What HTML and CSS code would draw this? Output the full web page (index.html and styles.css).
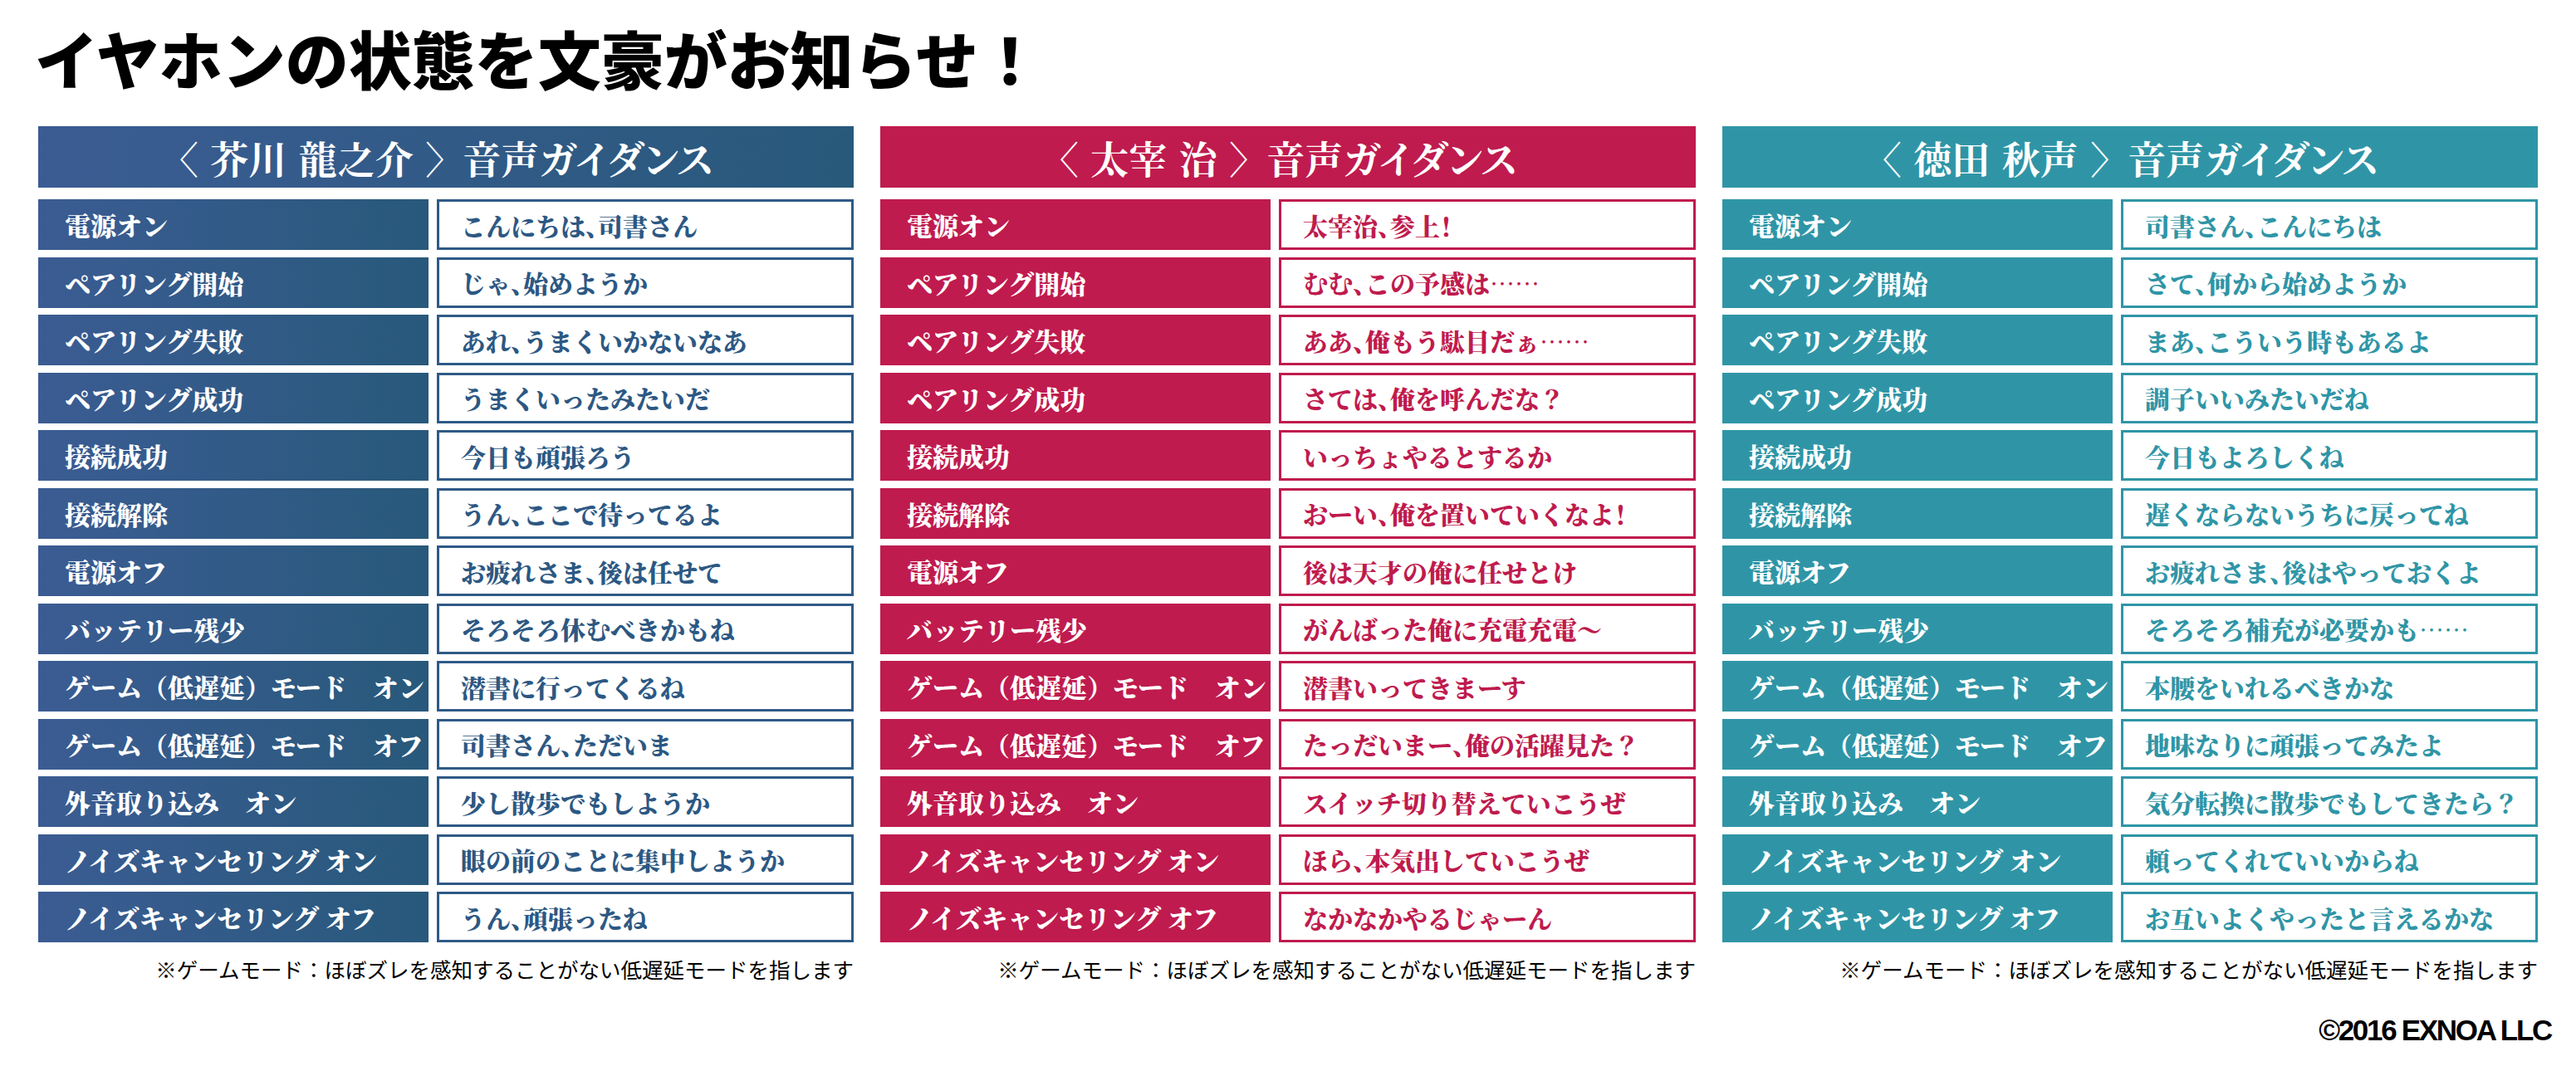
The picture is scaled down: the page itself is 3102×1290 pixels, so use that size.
FILE: index.html
```html
<!DOCTYPE html>
<html lang="ja">
<head>
<meta charset="utf-8">
<title>イヤホンの状態を文豪がお知らせ！</title>
<link rel="stylesheet" href="styles.css">
</head>
<body>
<div class="page">
  <h1 class="title">イヤホンの状態を文豪がお知らせ！</h1>
  <div class="columns">
    <section class="col col-blue">
      <div class="head">〈 芥川 龍之介 〉<span class="sub">音声ガイダンス</span></div>
      <div class="rows">
        <div class="row"><div class="key">電源オン</div><div class="val">こんにちは<span class="p">、</span>司書さん</div></div>
        <div class="row"><div class="key">ペアリング開始</div><div class="val">じゃ<span class="p">、</span>始めようか</div></div>
        <div class="row"><div class="key">ペアリング失敗</div><div class="val">あれ<span class="p">、</span>うまくいかないなあ</div></div>
        <div class="row"><div class="key">ペアリング成功</div><div class="val">うまくいったみたいだ</div></div>
        <div class="row"><div class="key">接続成功</div><div class="val">今日も頑張ろう</div></div>
        <div class="row"><div class="key">接続解除</div><div class="val">うん<span class="p">、</span>ここで待ってるよ</div></div>
        <div class="row"><div class="key">電源オフ</div><div class="val">お疲れさま<span class="p">、</span>後は任せて</div></div>
        <div class="row"><div class="key">バッテリー残少</div><div class="val">そろそろ休むべきかもね</div></div>
        <div class="row"><div class="key">ゲーム（低遅延）モード　オン</div><div class="val">潜書に行ってくるね</div></div>
        <div class="row"><div class="key">ゲーム（低遅延）モード　オフ</div><div class="val">司書さん<span class="p">、</span>ただいま</div></div>
        <div class="row"><div class="key">外音取り込み　オン</div><div class="val">少し散歩でもしようか</div></div>
        <div class="row"><div class="key">ノイズキャンセリング オン</div><div class="val">眼の前のことに集中しようか</div></div>
        <div class="row"><div class="key">ノイズキャンセリング オフ</div><div class="val">うん<span class="p">、</span>頑張ったね</div></div>
      </div>
      <p class="note">※ゲームモード：ほぼズレを感知することがない低遅延モードを指します</p>
    </section>
    <section class="col col-red">
      <div class="head">〈 太宰 治 〉<span class="sub">音声ガイダンス</span></div>
      <div class="rows">
        <div class="row"><div class="key">電源オン</div><div class="val">太宰治<span class="p">、</span>参上<span class="p">！</span></div></div>
        <div class="row"><div class="key">ペアリング開始</div><div class="val">むむ<span class="p">、</span>この予感は……</div></div>
        <div class="row"><div class="key">ペアリング失敗</div><div class="val">ああ<span class="p">、</span>俺もう駄目だぁ……</div></div>
        <div class="row"><div class="key">ペアリング成功</div><div class="val">さては<span class="p">、</span>俺を呼んだな<span class="p">？</span></div></div>
        <div class="row"><div class="key">接続成功</div><div class="val">いっちょやるとするか</div></div>
        <div class="row"><div class="key">接続解除</div><div class="val">おーい<span class="p">、</span>俺を置いていくなよ<span class="p">！</span></div></div>
        <div class="row"><div class="key">電源オフ</div><div class="val">後は天才の俺に任せとけ</div></div>
        <div class="row"><div class="key">バッテリー残少</div><div class="val">がんばった俺に充電充電～</div></div>
        <div class="row"><div class="key">ゲーム（低遅延）モード　オン</div><div class="val">潜書いってきまーす</div></div>
        <div class="row"><div class="key">ゲーム（低遅延）モード　オフ</div><div class="val">たっだいまー<span class="p">、</span>俺の活躍見た<span class="p">？</span></div></div>
        <div class="row"><div class="key">外音取り込み　オン</div><div class="val">スイッチ切り替えていこうぜ</div></div>
        <div class="row"><div class="key">ノイズキャンセリング オン</div><div class="val">ほら<span class="p">、</span>本気出していこうぜ</div></div>
        <div class="row"><div class="key">ノイズキャンセリング オフ</div><div class="val">なかなかやるじゃーん</div></div>
      </div>
      <p class="note">※ゲームモード：ほぼズレを感知することがない低遅延モードを指します</p>
    </section>
    <section class="col col-teal">
      <div class="head">〈 徳田 秋声 〉<span class="sub">音声ガイダンス</span></div>
      <div class="rows">
        <div class="row"><div class="key">電源オン</div><div class="val">司書さん<span class="p">、</span>こんにちは</div></div>
        <div class="row"><div class="key">ペアリング開始</div><div class="val">さて<span class="p">、</span>何から始めようか</div></div>
        <div class="row"><div class="key">ペアリング失敗</div><div class="val">まあ<span class="p">、</span>こういう時もあるよ</div></div>
        <div class="row"><div class="key">ペアリング成功</div><div class="val">調子いいみたいだね</div></div>
        <div class="row"><div class="key">接続成功</div><div class="val">今日もよろしくね</div></div>
        <div class="row"><div class="key">接続解除</div><div class="val">遅くならないうちに戻ってね</div></div>
        <div class="row"><div class="key">電源オフ</div><div class="val">お疲れさま<span class="p">、</span>後はやっておくよ</div></div>
        <div class="row"><div class="key">バッテリー残少</div><div class="val">そろそろ補充が必要かも……</div></div>
        <div class="row"><div class="key">ゲーム（低遅延）モード　オン</div><div class="val">本腰をいれるべきかな</div></div>
        <div class="row"><div class="key">ゲーム（低遅延）モード　オフ</div><div class="val">地味なりに頑張ってみたよ</div></div>
        <div class="row"><div class="key">外音取り込み　オン</div><div class="val">気分転換に散歩でもしてきたら<span class="p">？</span></div></div>
        <div class="row"><div class="key">ノイズキャンセリング オン</div><div class="val">頼ってくれていいからね</div></div>
        <div class="row"><div class="key">ノイズキャンセリング オフ</div><div class="val">お互いよくやったと言えるかな</div></div>
      </div>
      <p class="note">※ゲームモード：ほぼズレを感知することがない低遅延モードを指します</p>
    </section>
  </div>
  <p class="copy">©2016 EXNOA LLC</p>
</div>
</body>
</html>
```
FILE: styles.css
```css
* { box-sizing: border-box; margin: 0; padding: 0; }
html, body { background: #fff; }
body {
  font-family: "Noto Sans CJK JP", "Noto Sans", sans-serif;
  color: #000;
}
.page {
  width: 3102px;
  height: 1290px;
  padding: 24px 30px 0 46px;
  overflow: hidden;
}
.title {
  font-size: 76px;
  font-weight: 900;
  line-height: 90px;
  margin-left: -4px;
}
.columns {
  display: grid;
  grid-template-columns: repeat(3, 982px);
  column-gap: 32px;
  margin-top: 38px;
}
.col { display: flex; flex-direction: column; }
.head {
  height: 74px;
  display: flex;
  align-items: center;
  justify-content: center;
  color: #fff;
  font-family: "Noto Serif CJK JP", "Noto Sans CJK JP", serif;
  font-size: 46px;
  font-weight: 700;
  font-feature-settings: "palt";
  word-spacing: 3px;
  white-space: pre;
}
.sub { margin-left: 22px; }
.rows {
  margin-top: 14px;
  display: flex;
  flex-direction: column;
  gap: 8.5px;
}
.row {
  display: grid;
  grid-template-columns: 470px 502px;
  column-gap: 10px;
  height: 61px;
}
.key, .val {
  display: flex;
  align-items: center;
  font-family: "Noto Serif CJK JP", "Noto Sans CJK JP", serif;
  white-space: pre;
}
.key {
  color: #fff;
  font-size: 31px;
  font-weight: 900;
  padding-left: 32px;
}
.val {
  background: #fff;
  border: 3px solid;
  font-size: 30px;
  font-weight: 900;
  padding-left: 26px;
}
.p { font-feature-settings: "halt"; }
.note {
  margin-top: 17px;
  text-align: right;
  font-size: 25.5px;
  line-height: 30px;
  font-weight: 400;
  color: #000;
  white-space: nowrap;
}
.copy {
  margin-top: 39px;
  text-align: right;
  font-family: "Liberation Sans", Arial, sans-serif;
  font-weight: 700;
  font-size: 35px;
  line-height: 40px;
  letter-spacing: -2.3px;
}

/* colour themes */
.col-blue .head,
.col-blue .key { background: linear-gradient(90deg, #3b5c93 0%, #28597b 100%); }
.col-blue .val { border-color: #2e5a86; color: #2c5883; }

.col-red .head,
.col-red .key { background: #bf1b4e; }
.col-red .val { border-color: #bf1b4e; color: #bf1b4e; }

.col-teal .head,
.col-teal .key { background: #2f95a6; }
.col-teal .val { border-color: #2f95a6; color: #2f95a6; }
```
